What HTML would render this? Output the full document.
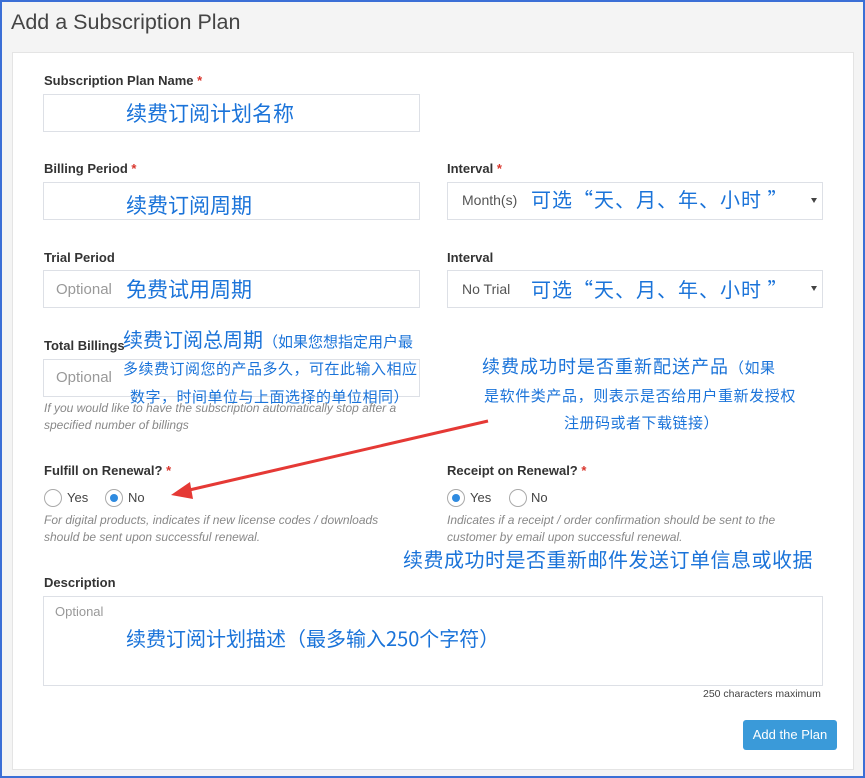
<!DOCTYPE html>
<html><head><meta charset="utf-8"><style>
*{box-sizing:border-box;margin:0;padding:0}
body{width:865px;height:778px;overflow:hidden;background:#fff;font-family:"Liberation Sans",Arial,sans-serif;position:relative}
.frame{position:absolute;left:0;top:0;width:865px;height:778px;border:2px solid #3b6fd6;background:#f4f4f4}
.card{position:absolute;left:12px;top:52px;width:842px;height:718px;background:#fff;border:1px solid #e4e4e4}
.a{position:absolute;white-space:nowrap}
h1{position:absolute;left:11px;top:10px;font-weight:normal;font-size:21.5px;color:#444}
.lbl{font-size:13px;font-weight:bold;color:#333}
.req{color:#d9352c}
.inp{position:absolute;border:1px solid #dde0e6;background:#fff;height:38px}
.ph{font-size:15px;color:#999}
.cn{font-family:"Noto Sans CJK SC","Liberation Sans",sans-serif;color:#1a73d9}
.help{font-size:12px;font-style:italic;color:#888;line-height:17px}
.radio{position:absolute;width:18px;height:18px;border:1px solid #aaa;border-radius:50%;background:#fff}
.radio.on::after{content:"";position:absolute;left:4px;top:4px;width:8px;height:8px;border-radius:50%;background:#2f8be0}
.rt{font-size:13px;color:#444}
.caret{position:absolute;right:5px;top:15px;width:0;height:0;border-left:3px solid transparent;border-right:3px solid transparent;border-top:5px solid #444}
</style></head><body>
<div class="frame"></div>
<h1>Add a Subscription Plan</h1>
<div class="card"></div>

<div class="a lbl" style="left:44px;top:73px">Subscription Plan Name <span class="req">*</span></div>
<div class="inp" style="left:43px;top:94px;width:377px"></div>
<div class="a cn" style="left:126px;top:98px;font-size:21px">续费订阅计划名称</div>

<div class="a lbl" style="left:44px;top:161px">Billing Period <span class="req">*</span></div>
<div class="inp" style="left:43px;top:182px;width:377px"></div>
<div class="a cn" style="left:126px;top:190px;font-size:21px">续费订阅周期</div>

<div class="a lbl" style="left:447px;top:161px">Interval <span class="req">*</span></div>
<div class="inp" style="left:447px;top:182px;width:376px"><div class="caret"></div></div>
<div class="a" style="left:462px;top:192px;font-size:14px;color:#555">Month(s)</div>
<div class="a cn" style="left:531px;top:184px;font-size:20px;letter-spacing:1px">可选“天、月、年、小时 ”</div>

<div class="a lbl" style="left:44px;top:250px">Trial Period</div>
<div class="inp" style="left:43px;top:270px;width:377px"></div>
<div class="a ph" style="left:56px;top:281px">Optional</div>
<div class="a cn" style="left:126px;top:274px;font-size:21px">免费试用周期</div>

<div class="a lbl" style="left:447px;top:250px">Interval</div>
<div class="inp" style="left:447px;top:270px;width:376px"><div class="caret"></div></div>
<div class="a" style="left:462px;top:281px;font-size:14px;color:#555">No Trial</div>
<div class="a cn" style="left:531px;top:274px;font-size:20px;letter-spacing:1px">可选“天、月、年、小时 ”</div>

<div class="a lbl" style="left:44px;top:338px">Total Billings</div>
<div class="inp" style="left:43px;top:359px;width:377px"></div>
<div class="a ph" style="left:56px;top:369px">Optional</div>
<div class="a cn" style="left:123px;top:324px;font-size:20px">续费订阅总周期<span style="font-size:15px">（如果您想指定用户最</span></div>
<div class="a cn" style="left:123px;top:358px;font-size:15px;letter-spacing:0.5px">多续费订阅您的产品多久，可在此输入相应</div>
<div class="a cn" style="left:130px;top:386px;font-size:15px;letter-spacing:0.5px">数字，时间单位与上面选择的单位相同）</div>
<div class="a help" style="left:44px;top:400px">If you would like to have the subscription automatically stop after a<br>specified number of billings</div>

<div class="a cn" style="left:482px;top:353px;font-size:18px;letter-spacing:1px">续费成功时是否重新配送产品<span style="font-size:15px;letter-spacing:0.5px">（如果</span></div>
<div class="a cn" style="left:484px;top:385px;font-size:15px;letter-spacing:0.6px">是软件类产品，则表示是否给用户重新发授权</div>
<div class="a cn" style="left:564px;top:412px;font-size:15px;letter-spacing:0.5px">注册码或者下载链接）</div>

<div class="a lbl" style="left:44px;top:463px">Fulfill on Renewal? <span class="req">*</span></div>
<div class="radio" style="left:44px;top:489px"></div><div class="a rt" style="left:67px;top:490px">Yes</div>
<div class="radio on" style="left:105px;top:489px"></div><div class="a rt" style="left:128px;top:490px">No</div>
<div class="a help" style="left:44px;top:512px">For digital products, indicates if new license codes / downloads<br>should be sent upon successful renewal.</div>

<div class="a lbl" style="left:447px;top:463px">Receipt on Renewal? <span class="req">*</span></div>
<div class="radio on" style="left:447px;top:489px"></div><div class="a rt" style="left:470px;top:490px">Yes</div>
<div class="radio" style="left:509px;top:489px"></div><div class="a rt" style="left:531px;top:490px">No</div>
<div class="a help" style="left:447px;top:512px">Indicates if a receipt / order confirmation should be sent to the<br>customer by email upon successful renewal.</div>
<div class="a cn" style="left:403px;top:544px;font-size:20px;letter-spacing:0.5px">续费成功时是否重新邮件发送订单信息或收据</div>

<svg style="position:absolute;left:0;top:0" width="865" height="778"><line x1="488" y1="421" x2="185" y2="491" stroke="#e53935" stroke-width="3"/><polygon points="171,495 190,482 193,499" fill="#e53935"/></svg>

<div class="a lbl" style="left:44px;top:575px">Description</div>
<div class="inp" style="left:43px;top:596px;width:780px;height:90px"></div>
<div class="a" style="left:55px;top:604px;font-size:13px;color:#999">Optional</div>
<div class="a cn" style="left:126px;top:623px;font-size:20px">续费订阅计划描述（最多输入250个字符）</div>
<div class="a" style="left:703px;top:688px;font-size:10.5px;color:#444">250 characters maximum</div>

<div class="a" style="left:743px;top:720px;width:94px;height:30px;background:#3a9ad9;border-radius:3px;color:#fff;font-size:13px;text-align:center;line-height:30px">Add the Plan</div>
</body></html>
